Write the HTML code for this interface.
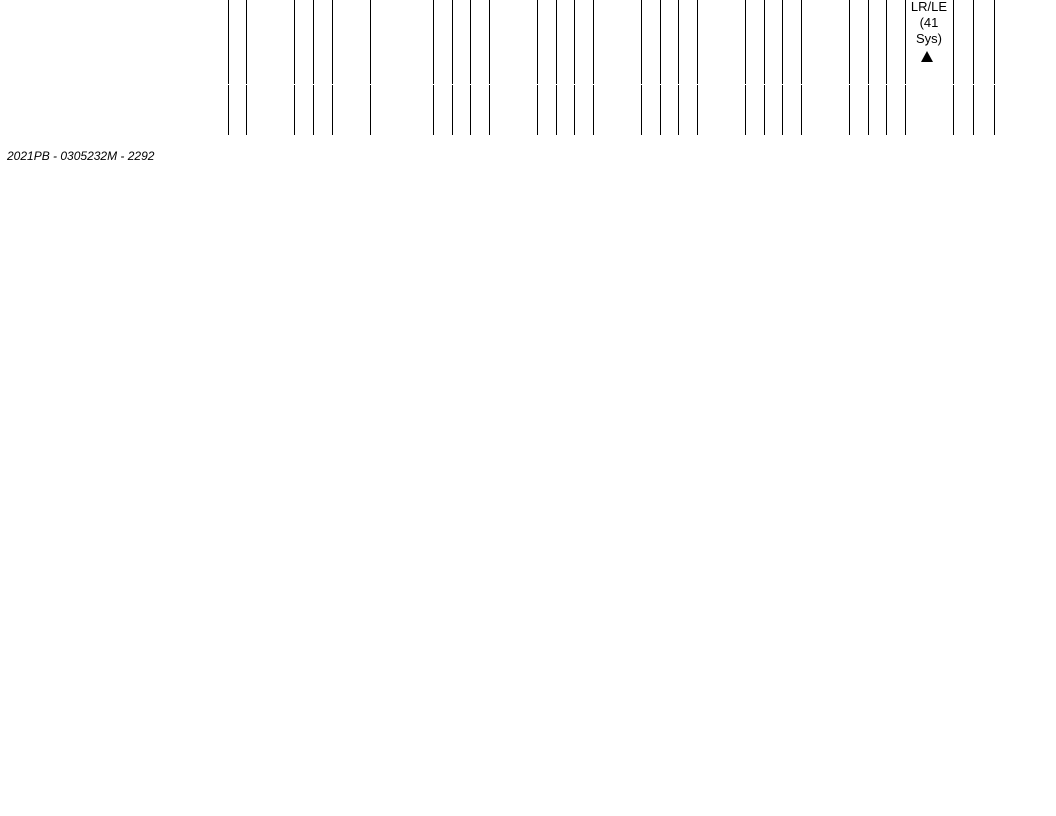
<!DOCTYPE html>
<html><head><style>
body{margin:0;width:1056px;height:816px;background:#fff;position:relative;overflow:hidden;font-family:"Liberation Sans",sans-serif}
.l{position:absolute;width:1px;background:#000}
.t{position:absolute;left:7px;top:149px;font-size:12px;font-style:italic;color:#000}
.lab{position:absolute;left:904px;width:50px;text-align:center;top:-1px;font-size:13px;line-height:16px;color:#000}
.tri{position:absolute;left:921px;top:51px;width:0;height:0;border-left:6px solid transparent;border-right:6px solid transparent;border-bottom:11px solid #000}
</style></head><body>
<div id="c"></div>
<div class="lab">LR/LE<br>(41<br>Sys)</div>
<div class="tri"></div>
<div class="t">2021PB - 0305232M - 2292</div>
<script>
var xs=[228,246,294,313,332,370,433,452,470,489,537,556,574,593,641,660,678,697,745,764,782,801,849,868,886,905,953,973,994];
var h='';xs.forEach(function(x){h+='<div class="l" style="left:'+x+'px;top:0;height:84px"></div><div class="l" style="left:'+x+'px;top:85px;height:50px"></div>';});
document.getElementById('c').innerHTML=h;
</script>
</body></html>
